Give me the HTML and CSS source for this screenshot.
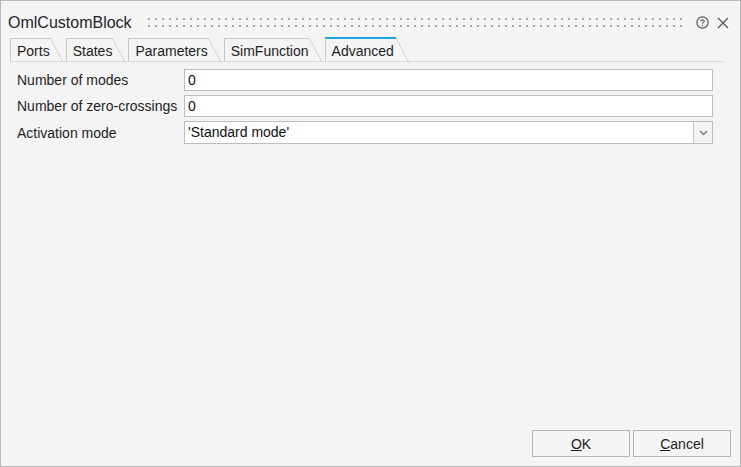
FILE: index.html
```html
<!DOCTYPE html>
<html lang="en">
<head>
    <meta charset="UTF-8">
    <title>OmlCustomBlock</title>
    <link rel="stylesheet" href="styles.css">
</head>
<body>
    <div class="window">
        <div class="titlebar">
            <span class="title">OmlCustomBlock</span>
            <span class="grip"></span>
            <svg class="icon-help" width="13" height="13" viewBox="0 0 13 13">
                <circle cx="6.5" cy="6.5" r="5.6" fill="none" stroke="#5a5a5a" stroke-width="1.2"/>
                <path d="M4.7 5.2 C4.7 3.4 8.3 3.4 8.3 5.2 C8.3 6.4 6.5 6.4 6.5 7.8" fill="none" stroke="#5a5a5a" stroke-width="1.2"/>
                <rect x="5.9" y="8.8" width="1.2" height="1.2" fill="#5a5a5a"/>
            </svg>
            <svg class="icon-close" width="12" height="12" viewBox="0 0 12 12">
                <path d="M1 1 L11 11 M11 1 L1 11" stroke="#5a5a5a" stroke-width="1.4"/>
            </svg>
        </div>

        <div class="tabs">
            <div class="tab">Ports</div>
            <div class="tab">States</div>
            <div class="tab">Parameters</div>
            <div class="tab">SimFunction</div>
            <div class="tab active">Advanced</div>
        </div>

        <div class="content">
            <div class="form">
                <label>Number of modes</label>
                <div class="field">0</div>
                <label>Number of zero-crossings</label>
                <div class="field">0</div>
                <label>Activation mode</label>
                <div class="combo">
                    <div class="combo-value">'Standard mode'</div>
                    <div class="combo-btn">
                        <svg width="9" height="6" viewBox="0 0 9 6">
                            <path d="M1 1 L4.5 4.5 L8 1" fill="none" stroke="#7a7a7a" stroke-width="1.4"/>
                        </svg>
                    </div>
                </div>
            </div>
        </div>

        <div class="footer">
            <button class="btn"><u>O</u>K</button>
            <button class="btn"><u>C</u>ancel</button>
        </div>
    </div>
</body>
</html>
```

FILE: styles.css
```css
body {
    margin: 0;
    padding: 0;
    font-family: "Liberation Sans", Arial, sans-serif;
    color: #222;
}
.window {
    width: 741px;
    height: 467px;
    box-sizing: border-box;
    border: 1px solid #b9b9b9;
    background-color: #f4f4f4;
    display: flex;
    flex-direction: column;
}
.titlebar {
    display: flex;
    align-items: center;
    height: 29px;
    padding: 7px 11px 0 7px;
}
.title {
    font-size: 16px;
    color: #262626;
}
.grip {
    flex: 1;
    height: 9px;
    margin: 0 12px 0 16px;
    background-image:
        linear-gradient(90deg, #f4f4f4 5px, transparent 5px),
        linear-gradient(#a9a9a9 2px, transparent 2px);
    background-size: 7px 7px;
    background-position: -5px 0;
}
.icon-help {
    margin-right: 8px;
}
.tabs {
    display: flex;
    align-items: flex-end;
    height: 24px;
    margin: 0 17px 0 9px;
    border-bottom: 1px solid #dadada;
    font-size: 14px;
}
.tab {
    position: relative;
    box-sizing: border-box;
    height: 23px;
    padding: 4px 0 0 6px;
    margin-right: 16px;
    border-left: 1px solid #c8c8c8;
    border-top: 1px solid #c8c8c8;
    color: #1e1e1e;
}
.tab::after {
    content: "";
    position: absolute;
    top: -1px;
    right: -13px;
    width: 13px;
    height: 24px;
    background: linear-gradient(to top right, transparent calc(50% - 0.7px), #c8c8c8 50%, transparent calc(50% + 0.7px));
}
.tab.active {
    height: 24px;
    padding: 4px 2px 0 6px;
    border-top: 2px solid #1ba3e6;
    margin-right: 0;
}
.tab.active::after {
    top: -1px;
    height: 25px;
}
.content {
    flex: 1;
    padding: 7px 27px 0 16px;
}
.form {
    display: grid;
    grid-template-columns: 167px 1fr;
    row-gap: 4px;
    font-size: 14px;
}
.form label {
    display: flex;
    align-items: center;
    color: #1e1e1e;
}
.field {
    height: 22px;
    box-sizing: border-box;
    border: 1px solid #bdbdbd;
    background-color: #fff;
    padding: 2px 3px 0;
    color: #111;
}
.combo {
    display: flex;
    height: 23px;
    box-sizing: border-box;
    border: 1px solid #bdbdbd;
    background-color: #fff;
}
.combo-value {
    flex: 1;
    padding: 2px 3px 0;
    color: #111;
}
.combo-btn {
    width: 18px;
    border-left: 1px solid #c6c6c6;
    background-color: #f4f4f4;
    display: flex;
    align-items: center;
    justify-content: center;
}
.footer {
    display: flex;
    justify-content: flex-end;
    gap: 3px;
    padding: 0 9px 9px 0;
}
.btn {
    width: 98px;
    height: 27px;
    border: 1px solid #b4b4b4;
    background-color: #f4f4f4;
    font-family: "Liberation Sans", Arial, sans-serif;
    font-size: 14px;
    color: #1e1e1e;
    padding: 0;
}
```
